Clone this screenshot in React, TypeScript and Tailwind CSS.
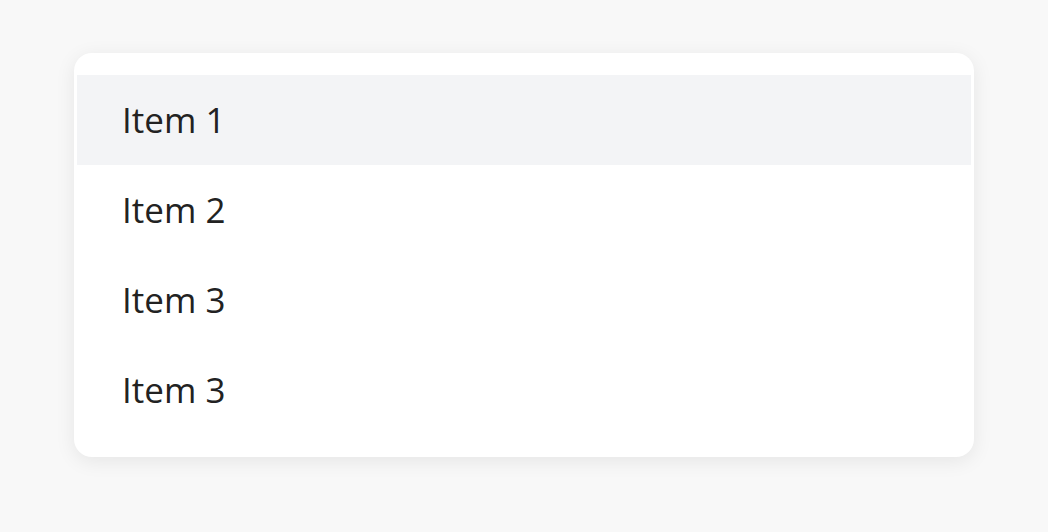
import React from "react";

export default function App() {
  const items = ["Item 1", "Item 2", "Item 3", "Item 3"];
  return (
    <div className="w-[1048px] h-[532px] bg-[#f8f8f8] pt-[53px] pl-[74px]" style={{ fontFamily: '"Open Sans", "Noto Sans", sans-serif' }}>
      <div className="w-[900px] h-[404px] bg-white rounded-[18px] shadow-[0_4px_20px_rgba(0,0,0,0.08)] py-[22px] px-[3px] flex flex-col">
        {items.map((t, i) => (
          <div
            key={i}
            className={`h-[90px] flex items-center pl-[45px] text-[35px] text-[#222222] ${i === 0 ? "bg-[#f3f4f6]" : ""}`}
          >
            {t}
          </div>
        ))}
      </div>
    </div>
  );
}
